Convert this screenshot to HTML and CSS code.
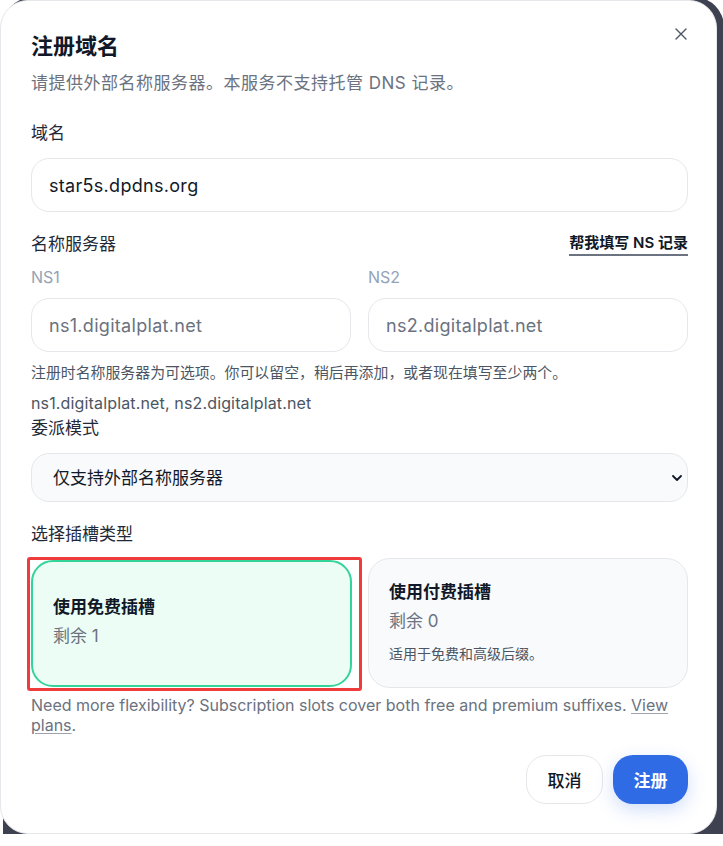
FILE: index.html
```html
<!DOCTYPE html>
<html lang="zh-CN">
<head>
  <meta charset="UTF-8">
  <title>注册域名</title>
  <link rel="stylesheet" href="styles.css">
</head>
<body>

<div class="stage">
  <div class="backdrop"></div>

  <div class="modal">
    <button class="close" aria-label="关闭">
      <svg width="12" height="12" viewBox="0 0 12 12"><path d="M1 1L11 11M11 1L1 11" stroke="#4b5563" stroke-width="1.4" stroke-linecap="round"/></svg>
    </button>

    <h2 class="title">注册域名</h2>
    <p class="subtitle">请提供外部名称服务器。本服务不支持托管 DNS 记录。</p>

    <label class="label label-domain">域名</label>
    <input class="field" type="text" value="star5s.dpdns.org">

    <div class="ns-head">
      <span class="label">名称服务器</span>
      <a class="fill-link" href="#">帮我填写 NS 记录</a>
    </div>

    <div class="ns-grid">
      <div class="ns-col">
        <span class="ns-label">NS1</span>
        <input class="field" type="text" placeholder="ns1.digitalplat.net">
      </div>
      <div class="ns-col">
        <span class="ns-label">NS2</span>
        <input class="field" type="text" placeholder="ns2.digitalplat.net">
      </div>
    </div>

    <p class="hint">注册时名称服务器为可选项。你可以留空，稍后再添加，或者现在填写至少两个。</p>
    <p class="ns-list">ns1.digitalplat.net, ns2.digitalplat.net</p>

    <label class="label label-mode">委派模式</label>
    <div class="select-wrap">
      <select class="select">
        <option>仅支持外部名称服务器</option>
      </select>
      <svg class="chevron" width="10" height="6" viewBox="0 0 10 6"><path d="M1 1L5 5L9 1" fill="none" stroke="#111827" stroke-width="1.8" stroke-linecap="round" stroke-linejoin="round"/></svg>
    </div>

    <label class="label label-slot">选择插槽类型</label>
    <div class="slots">
      <div class="slot slot-free active">
        <div class="slot-title">使用免费插槽</div>
        <div class="slot-count">剩余 1</div>
      </div>
      <div class="slot slot-paid">
        <div class="slot-title">使用付费插槽</div>
        <div class="slot-count">剩余 0</div>
        <div class="slot-note">适用于免费和高级后缀。</div>
      </div>
    </div>

    <p class="more">Need more flexibility? Subscription slots cover both free and premium suffixes. <a href="#">View plans</a>.</p>

    <div class="actions">
      <button class="btn btn-cancel">取消</button>
      <button class="btn btn-primary">注册</button>
    </div>
  </div>
</div>

</body>
</html>
```

FILE: styles.css
```css
body {
  margin: 0;
  background: #ffffff;
  font-family: Inter, "Noto Sans CJK SC", sans-serif;
  color: #111827;
  overflow: hidden;
}

.stage {
  position: relative;
  width: 717px;
}

.backdrop {
  position: absolute;
  top: -3px;
  left: 3px;
  right: -7px;
  bottom: -40px;
  background: #3e4150;
  border-radius: 30px;
}

.modal {
  position: relative;
  box-sizing: border-box;
  width: 717px;
  height: 834px;
  padding: 30px 28px 29px 30px;
  background: #ffffff;
  border: 1px solid #e5e7eb;
  border-radius: 28px;
  display: flex;
  flex-direction: column;
}

.close {
  position: absolute;
  top: 26px;
  right: 28px;
  width: 14px;
  height: 14px;
  padding: 0;
  border: none;
  background: none;
  display: flex;
  align-items: center;
  justify-content: center;
}

.title {
  margin: 0;
  font-size: 22px;
  line-height: 30px;
  font-weight: 700;
  color: #111827;
}

.subtitle {
  margin: 10px 0 0;
  font-size: 17px;
  line-height: 24px;
  letter-spacing: 0.5px;
  color: #6b7280;
}

.label {
  display: block;
  font-size: 17px;
  line-height: 24px;
  color: #1f2937;
}

.label-domain {
  margin-top: 26px;
}

.field {
  box-sizing: border-box;
  width: 100%;
  height: 54px;
  margin-top: 13px;
  padding: 0 17px;
  border: 1px solid #e5e7eb;
  border-radius: 18px;
  background: #ffffff;
  font-family: inherit;
  font-size: 18px;
  letter-spacing: 0.3px;
  color: #111827;
  outline: none;
}

.field::placeholder {
  color: #6b7280;
}

.ns-head {
  display: flex;
  justify-content: space-between;
  align-items: center;
  margin-top: 20px;
}

.fill-link {
  font-size: 15px;
  line-height: 22px;
  font-weight: 600;
  color: #111827;
  text-decoration: none;
  border-bottom: 2px solid #6b7280;
}

.ns-grid {
  display: grid;
  grid-template-columns: 1fr 1fr;
  gap: 17px;
  margin-top: 10px;
}

.ns-col {
  display: flex;
  flex-direction: column;
}

.ns-label {
  font-size: 16px;
  line-height: 22px;
  color: #94a3b8;
}

.ns-col .field {
  margin-top: 10px;
}

.hint {
  margin: 10px 0 0;
  font-size: 14.9px;
  line-height: 22px;
  color: #4b5563;
}

.ns-list {
  margin: 8px 0 0;
  font-size: 16px;
  line-height: 22px;
  letter-spacing: 0.15px;
  color: #4b5563;
}

.label-mode {
  margin-top: 2px;
}

.select-wrap {
  position: relative;
  margin-top: 13px;
}

.select {
  box-sizing: border-box;
  width: 100%;
  height: 49px;
  padding: 0 21px;
  appearance: none;
  border: 1px solid #e5e7eb;
  border-radius: 18px;
  background: #f8fafc;
  font-family: inherit;
  font-size: 17px;
  color: #111827;
}

.chevron {
  position: absolute;
  right: 6px;
  top: 22px;
}

.label-slot {
  margin-top: 20px;
}

.slots {
  display: grid;
  grid-template-columns: 1fr 1fr;
  gap: 16px;
  margin-top: 12px;
}

.slot {
  position: relative;
  box-sizing: border-box;
  min-height: 127px;
  padding: 19px 20px 21px;
  border: 1px solid #e5e7eb;
  border-radius: 22px;
  background: #f8fafc;
  display: flex;
  flex-direction: column;
  justify-content: center;
}

.slot-free {
  width: 321px;
  margin: 2px 0 1px;
  padding-bottom: 23px;
  border: 2px solid #34d399;
  background: #ecfdf5;
}

.slot-free::after {
  content: "";
  position: absolute;
  top: -5px;
  left: -6px;
  right: -12px;
  bottom: -6px;
  border: 3px solid #ef3b3b;
  border-radius: 3px;
}

.slot-title {
  font-size: 17px;
  line-height: 24px;
  font-weight: 700;
  color: #111827;
}

.slot-count {
  margin-top: 4px;
  font-size: 17px;
  line-height: 26px;
  color: #6b7280;
}

.slot-note {
  margin-top: 10px;
  font-size: 14px;
  line-height: 20px;
  color: #4b5563;
}

.more {
  margin: 7px 0 0;
  font-size: 16px;
  line-height: 20px;
  color: #6b7280;
}

.more a {
  color: #6b7280;
  text-decoration: underline;
  text-decoration-color: #9ca3af;
  text-underline-offset: 2px;
}

.actions {
  display: flex;
  justify-content: flex-end;
  gap: 10px;
  margin-top: auto;
}

.btn {
  height: 49px;
  padding: 0 20px;
  border-radius: 20px;
  font-family: inherit;
  font-size: 17px;
  cursor: pointer;
}

.btn-cancel {
  width: 77px;
  border: 1px solid #e5e7eb;
  background: #ffffff;
  color: #111827;
  font-weight: 500;
}

.btn-primary {
  width: 75px;
  border: none;
  background: #2f6be4;
  color: #ffffff;
  font-weight: 700;
  box-shadow: 0 6px 18px rgba(47, 107, 228, 0.22);
}
```
